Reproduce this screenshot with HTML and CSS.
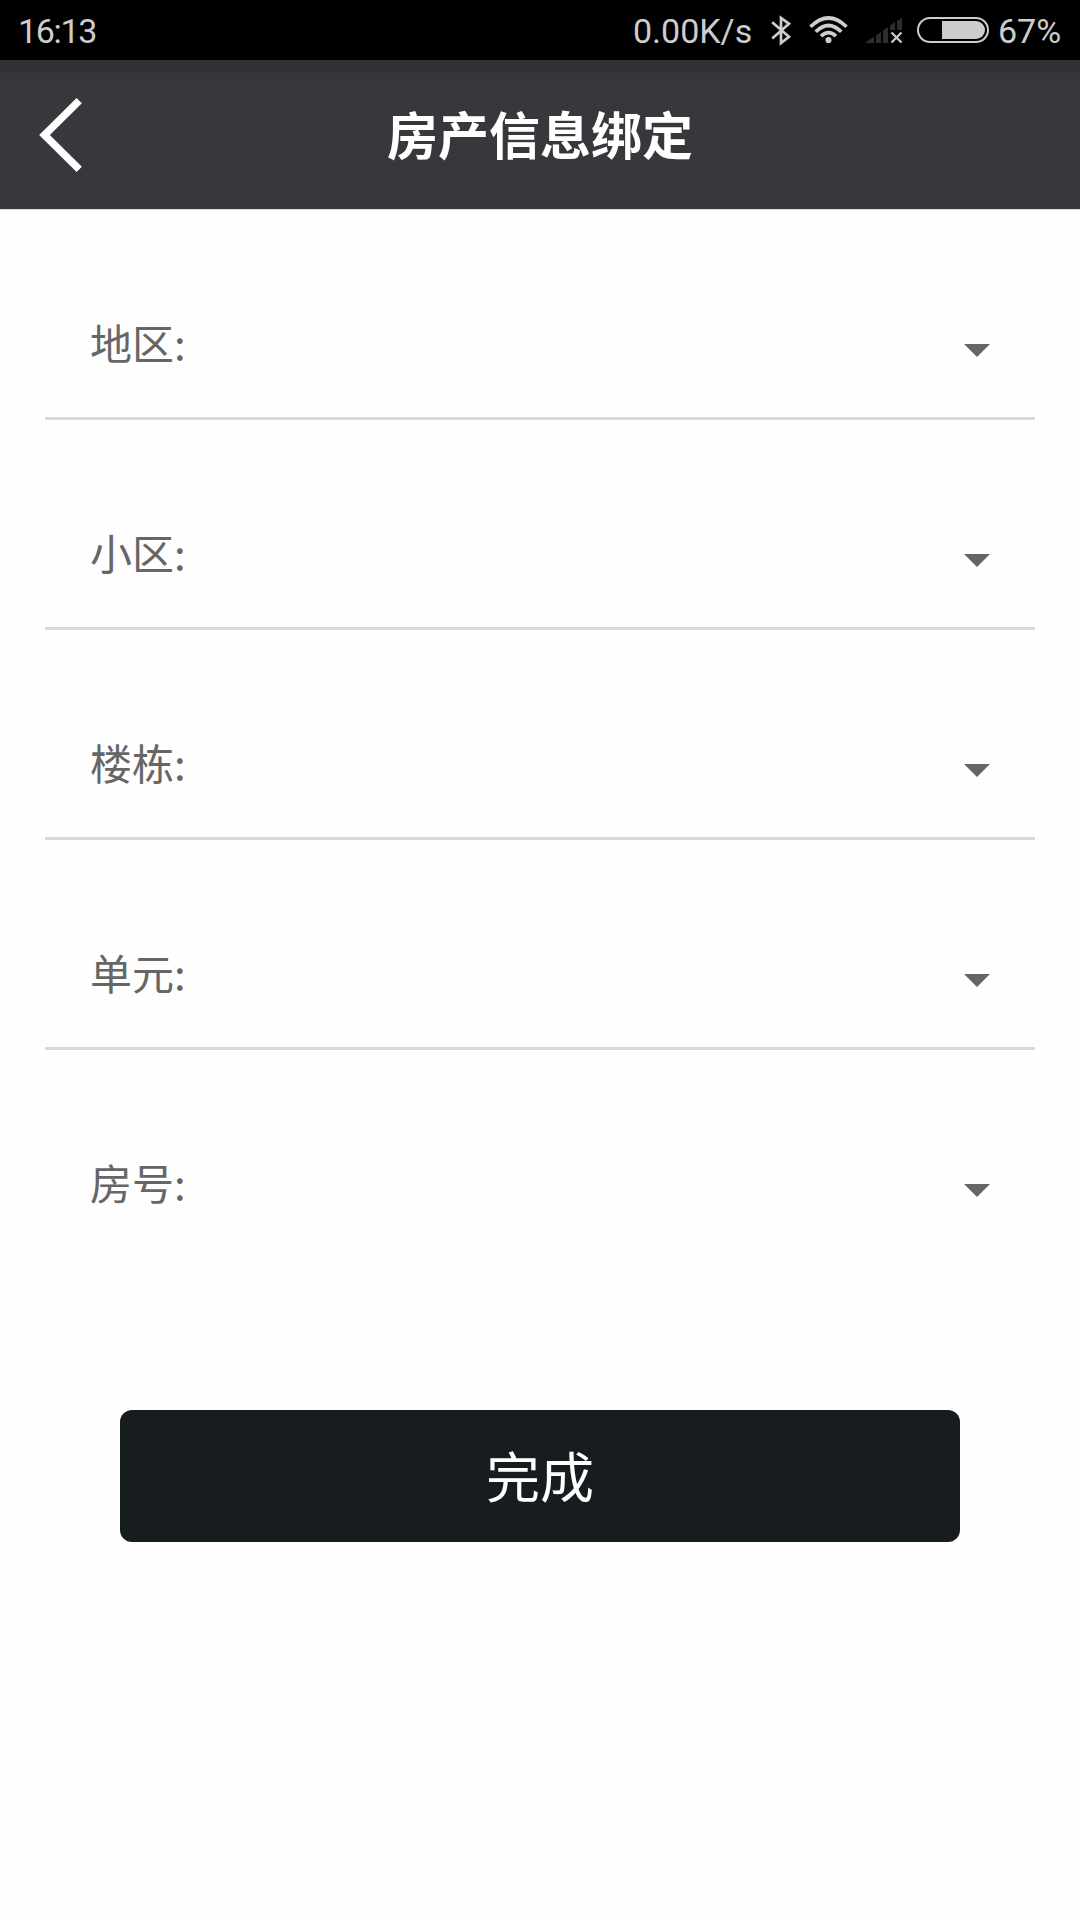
FILE: index.html
```html
<!DOCTYPE html>
<html lang="zh-CN">
<head>
<meta charset="utf-8">
<title>房产信息绑定</title>
<link rel="stylesheet" href="styles.css">
</head>
<body>
<div class="status-bar">
  <span class="time">16:13</span>
  <span class="speed">0.00K/s</span>
  <svg class="bluetooth" width="20" height="31" viewBox="0 0 20 31" fill="none" stroke="currentColor" stroke-width="2.7"><path d="M1.2 7.2 L18 21.8 L10 28 V3 L18 8.8 L1.2 23.5"/></svg>
  <svg class="wifi" width="39" height="28" viewBox="0 0 39 28" fill="none" stroke="currentColor" stroke-width="3.7"><path d="M1.5 10.8 Q19.5 -6.8 37.500 10.8M6.700 15.800 Q19.500 3.200 32.300 15.800M12 20.200 Q19.500 13 27 20.200"/><circle cx="19.500" cy="24" r="3.100" fill="currentColor" stroke="none"/></svg>
  <svg class="signal" width="38" height="26" viewBox="0 0 38 26"><path fill="#2d2d2d" d="M0 25 L9 18.500 V25Z M11 17.500 L16 14 V25 H11Z M18 12.500 L23 9 V25 H18Z M25 7.500 L30 4 V12 H25Z M32 3 L37 0 V12 H32Z"/><path fill="none" stroke="#cdcdcd" stroke-width="2.200" d="M26.500 14.500 L36.500 24.500 M36.500 14.500 L26.500 24.500"/></svg>
  <svg class="battery" width="72" height="26" viewBox="0 0 72 26"><rect x="1" y="1" width="70" height="24" rx="12" fill="none" stroke="currentColor" stroke-width="2"/><path fill="currentColor" d="M25 4 H59 A9 9 0 0 1 59 22 H25Z"/></svg>
  <span class="percent">67%</span>
</div>
<header class="header">
  <svg class="back" width="44" height="74" viewBox="0 0 44 74" fill="none" stroke="#fff" stroke-width="7.500"><path d="M40.200 2.700 L5.500 37 L40.200 71.300"/></svg>
  <h1 class="title">房产信息绑定</h1>
</header>
<main class="form">
  <div class="field"><span class="label">地区:</span><span class="caret"></span></div>
  <div class="field"><span class="label">小区:</span><span class="caret"></span></div>
  <div class="field"><span class="label">楼栋:</span><span class="caret"></span></div>
  <div class="field"><span class="label">单元:</span><span class="caret"></span></div>
  <div class="field"><span class="label">房号:</span><span class="caret"></span></div>
  <button class="submit" type="button">完成</button>
</main>
</body>
</html>
```

FILE: styles.css
```css
* {
  box-sizing: border-box;
}

body {
  margin: 0;
  min-height: 1920px;
  background: #fefefe;
  font-family: "Noto Sans CJK SC", sans-serif;
}

.status-bar {
  display: flex;
  align-items: flex-start;
  height: 60px;
  padding: 0 17px 0 18px;
  background: #000;
  color: #cdcdcd;
  font: 34px/60px Roboto, sans-serif;
  white-space: nowrap;
}

.status-bar span {
  flex: none;
  padding-top: 1px;
}

.status-bar svg {
  flex: none;
}

.time {
  width: 615px;
  letter-spacing: -1.3px;
}

.speed {
  width: 138px;
}

.bluetooth {
  margin-top: 15px;
}

.wifi {
  margin: 16px 0 0 18px;
}

.signal {
  margin: 18px 0 0 17px;
}

.battery {
  margin: 17px 0 0 14px;
}

.percent {
  margin-left: 9px;
}

.header {
  display: grid;
  grid-template-columns: 120px 1fr 120px;
  height: 149px;
  background: linear-gradient(#303033, #38373c 26px);
}

.back {
  margin: 38px 0 0 39px;
}

.title {
  margin: 0;
  color: #fff;
  font-size: 51px;
  font-weight: 700;
  line-height: 147px;
  text-align: center;
}

.form {
  display: flex;
  flex-direction: column;
  padding: 0 45px;
  border-top: 1px solid #d9d9d9;
}

.field {
  display: flex;
  justify-content: space-between;
  height: 210px;
  padding: 102px 45px 0;
  border-bottom: 3px solid #d9d9d9;
}

.field:nth-child(5) {
  border-bottom: 0;
}

.label {
  color: #666;
  font-size: 42px;
  line-height: 60px;
}

.caret {
  width: 26px;
  height: 13px;
  margin-top: 32px;
  background: #666;
  clip-path: polygon(0 0, 100% 0, 50% 100%);
}

.submit {
  height: 132px;
  margin: 150px 75px 0;
  padding: 0 0 3px;
  border: 0;
  border-radius: 12px;
  background: #171c1f;
  color: #fff;
  font: 54px/129px "Noto Sans CJK SC", sans-serif;
}
```
